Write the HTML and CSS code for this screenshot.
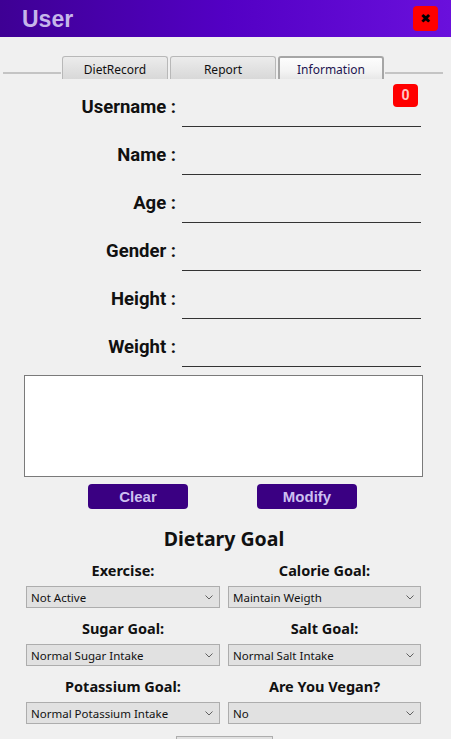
FILE: index.html
```html
<!DOCTYPE html>
<html lang="en">
<head>
<meta charset="utf-8">
<title>User</title>
<link rel="stylesheet" href="styles.css">
</head>
<body>
<div class="window">
  <header class="titlebar">
    <span class="title">User</span>
    <button class="close" type="button">✖</button>
  </header>
  <nav class="tabs">
    <span class="tabline"></span>
    <span class="tab">DietRecord</span>
    <span class="tab">Report</span>
    <span class="tab active">Information</span>
    <span class="tabline"></span>
  </nav>
  <main class="content">
    <span class="badge">0</span>
    <div class="form">
      <label class="flabel">Username :</label><div class="field"></div>
      <label class="flabel">Name :</label><div class="field"></div>
      <label class="flabel">Age :</label><div class="field"></div>
      <label class="flabel">Gender :</label><div class="field"></div>
      <label class="flabel">Height :</label><div class="field"></div>
      <label class="flabel">Weight :</label><div class="field"></div>
    </div>
    <div class="notes"></div>
    <div class="actions">
      <button class="pbtn" type="button">Clear</button>
      <button class="pbtn" type="button">Modify</button>
    </div>
    <h2 class="goal-title">Dietary Goal</h2>
    <div class="goals">
      <div class="goal">
        <div class="glabel">Exercise:</div>
        <div class="select"><span>Not Active</span><svg class="chev" width="8" height="5" viewBox="0 0 8 5"><path d="M0.5 0.5 L4 4 L7.5 0.5" fill="none" stroke="#606060" stroke-width="1"/></svg></div>
      </div>
      <div class="goal">
        <div class="glabel">Calorie Goal:</div>
        <div class="select"><span>Maintain Weigth</span><svg class="chev" width="8" height="5" viewBox="0 0 8 5"><path d="M0.5 0.5 L4 4 L7.5 0.5" fill="none" stroke="#606060" stroke-width="1"/></svg></div>
      </div>
      <div class="goal">
        <div class="glabel">Sugar Goal:</div>
        <div class="select"><span>Normal Sugar Intake</span><svg class="chev" width="8" height="5" viewBox="0 0 8 5"><path d="M0.5 0.5 L4 4 L7.5 0.5" fill="none" stroke="#606060" stroke-width="1"/></svg></div>
      </div>
      <div class="goal">
        <div class="glabel">Salt Goal:</div>
        <div class="select"><span>Normal Salt Intake</span><svg class="chev" width="8" height="5" viewBox="0 0 8 5"><path d="M0.5 0.5 L4 4 L7.5 0.5" fill="none" stroke="#606060" stroke-width="1"/></svg></div>
      </div>
      <div class="goal">
        <div class="glabel">Potassium Goal:</div>
        <div class="select"><span>Normal Potassium Intake</span><svg class="chev" width="8" height="5" viewBox="0 0 8 5"><path d="M0.5 0.5 L4 4 L7.5 0.5" fill="none" stroke="#606060" stroke-width="1"/></svg></div>
      </div>
      <div class="goal">
        <div class="glabel">Are You Vegan?</div>
        <div class="select"><span>No</span><svg class="chev" width="8" height="5" viewBox="0 0 8 5"><path d="M0.5 0.5 L4 4 L7.5 0.5" fill="none" stroke="#606060" stroke-width="1"/></svg></div>
      </div>
    </div>
    <div class="save-wrap"><button class="save" type="button" aria-label="Save"></button></div>
  </main>
</div>
</body>
</html>
```
FILE: styles.css
```css
* { box-sizing: border-box; }
html, body { margin: 0; padding: 0; }
body {
  width: 451px;
  height: 739px;
  overflow: hidden;
  background: #f0f0f0;
  font-family: "Noto Sans", "Liberation Sans", sans-serif;
}
.window { width: 451px; height: 739px; }
.titlebar {
  height: 37px;
  display: flex;
  align-items: center;
  justify-content: space-between;
  padding: 0 13px 0 22px;
  background: linear-gradient(90deg, #3e0094 0%, #5300c4 50%, #6a10dc 100%);
}
.title {
  font-family: "Liberation Sans", Arial, sans-serif;
  font-weight: bold;
  font-size: 23px;
  color: #c6b6ea;
  line-height: 1;
  margin-top: 1px;
}
.close {
  width: 25px;
  height: 25px;
  border: none;
  border-radius: 4px;
  background: #ff0000;
  color: #000;
  font-family: "DejaVu Sans", sans-serif;
  font-size: 13px;
  padding: 0;
  line-height: 25px;
}
.tabs {
  display: flex;
  align-items: flex-end;
  margin-top: 19px;
  padding: 0 8px 0 3px;
  height: 23px;
}
.tabline {
  flex: 1;
  height: 2px;
  background: #c4c4c4;
  margin-bottom: 5px;
}
.tab {
  width: 106px;
  height: 23px;
  margin: 0 1px;
  border: 1px solid #b8b8b8;
  border-bottom: none;
  border-radius: 3px 3px 0 0;
  background: linear-gradient(#ececec, #d8d8d8);
  font-size: 12px;
  color: #111;
  text-align: center;
  line-height: 25px;
}
.tab.active {
  border: 2px solid #a6a6a6;
  border-bottom: none;
  background: linear-gradient(#fdfdfd 0%, #f4f4f4 60%, #e8e8e8 100%);
  color: #1c1450;
  line-height: 23px;
}
.content { position: relative; }
.badge {
  position: absolute;
  left: 393px;
  top: 5px;
  width: 25px;
  height: 23px;
  border-radius: 4px;
  background: #ff0000;
  color: #ffc4c4;
  font-family: "Roboto", sans-serif;
  font-weight: bold;
  font-size: 14px;
  text-align: center;
  line-height: 23px;
}
.form {
  display: grid;
  grid-template-columns: 176px 239px;
  grid-auto-rows: 48px;
  column-gap: 6px;
}
.flabel {
  align-self: end;
  text-align: right;
  font-family: "Roboto", sans-serif;
  font-weight: bold;
  font-size: 18.5px;
  line-height: 20px;
  padding-bottom: 10px;
  color: #111;
}
.field { border-bottom: 1px solid #333; }
.notes {
  margin: 8px 0 0 24px;
  width: 399px;
  height: 102px;
  border: 1px solid #7a7a7a;
  background: #fff;
}
.actions {
  display: flex;
  gap: 69px;
  margin-top: 7px;
  padding-left: 88px;
}
.pbtn {
  width: 100px;
  height: 25px;
  border: none;
  border-radius: 4px;
  background: #3a0082;
  color: #cdbff0;
  font-family: "Liberation Sans", Arial, sans-serif;
  font-weight: bold;
  font-size: 15px;
  padding: 0;
}
.goal-title {
  margin: 18px 0 0;
  text-align: center;
  font-size: 19.5px;
  line-height: 24px;
  font-weight: bold;
  color: #111;
  padding-right: 3px;
}
.goals {
  display: grid;
  grid-template-columns: 194px 193px;
  column-gap: 8px;
  row-gap: 10px;
  margin: 9px 0 0 26px;
}
.glabel {
  text-align: center;
  font-weight: bold;
  font-size: 14.5px;
  line-height: 20px;
  margin-bottom: 6px;
  color: #111;
}
.select {
  height: 22px;
  display: flex;
  align-items: center;
  justify-content: space-between;
  padding: 0 6px 0 4px;
  background: #e1e1e1;
  border: 1px solid #adadad;
  font-size: 11.5px;
  color: #111;
}
.chev { display: block; }
.save-wrap {
  display: flex;
  justify-content: center;
  margin-top: 12px;
  padding-right: 3px;
}
.save {
  width: 97px;
  height: 25px;
  border: 1px solid #adadad;
  background: #e1e1e1;
}
```
